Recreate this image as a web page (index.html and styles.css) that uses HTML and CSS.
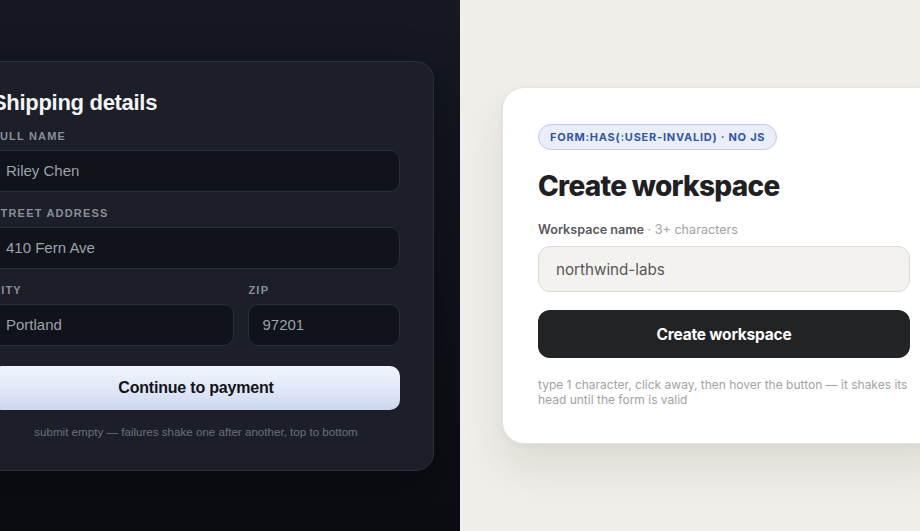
FILE: index.html
```html
<!DOCTYPE html>
<html lang="en">
<head>
<meta charset="utf-8">
<title>Forms</title>
<link rel="stylesheet" href="styles.css">
</head>
<body>
<main class="split">
  <section class="panel panel-dark">
    <form class="ship-card">
      <h2 class="ship-title">Shipping details</h2>
      <div class="ship-field">
        <label class="ship-label">Full name</label>
        <div class="ship-input">Riley Chen</div>
      </div>
      <div class="ship-field">
        <label class="ship-label">Street address</label>
        <div class="ship-input">410 Fern Ave</div>
      </div>
      <div class="ship-row">
        <div class="ship-field">
          <label class="ship-label">City</label>
          <div class="ship-input">Portland</div>
        </div>
        <div class="ship-field">
          <label class="ship-label">Zip</label>
          <div class="ship-input">97201</div>
        </div>
      </div>
      <button type="button" class="ship-button">Continue to payment</button>
      <p class="ship-hint">submit empty — failures shake one after another, top to bottom</p>
    </form>
  </section>
  <section class="panel panel-light">
    <form class="ws-card">
      <span class="ws-badge">form:has(:user-invalid) · no JS</span>
      <h2 class="ws-title">Create workspace</h2>
      <label class="ws-label"><strong>Workspace name</strong> · 3+ characters</label>
      <div class="ws-input">northwind-labs</div>
      <button type="button" class="ws-button">Create workspace</button>
      <p class="ws-hint">type 1 character, click away, then hover the button — it shakes its head until the form is valid</p>
    </form>
  </section>
</main>
</body>
</html>
```

FILE: styles.css
```css
* { box-sizing: border-box; }
html, body { margin: 0; padding: 0; }
body { width: 920px; height: 531px; overflow: hidden; }

.split {
  display: grid;
  grid-template-columns: 460px 460px;
  height: 531px;
}

.panel {
  display: flex;
  align-items: center;
  overflow: hidden;
  height: 531px;
}

.panel-dark {
  background: linear-gradient(180deg, #161922 0%, #10121a 55%, #0b0d12 100%);
  justify-content: flex-end;
  padding-right: 26px;
}

.ship-card {
  flex: 0 0 476px;
  width: 476px;
  background: #1c1f27;
  border: 1px solid #2c303a;
  border-radius: 18px;
  padding: 27px 33px 29px;
  font-family: "Liberation Sans", Arial, sans-serif;
  display: flex;
  flex-direction: column;
  box-shadow: 0 20px 50px rgba(0,0,0,0.35);
}

.ship-title {
  margin: 0 0 12px;
  font-size: 22px;
  line-height: 28px;
  font-weight: 700;
  letter-spacing: -0.3px;
  color: #f3f4f7;
}

.ship-field { display: flex; flex-direction: column; margin-bottom: 14px; }

.ship-label {
  font-size: 11px;
  line-height: 14px;
  font-weight: 700;
  letter-spacing: 1.2px;
  text-transform: uppercase;
  color: #8a8e99;
  margin-bottom: 7px;
}

.ship-input {
  height: 42px;
  border-radius: 10px;
  background: #11131a;
  border: 1px solid #2a2e38;
  padding: 0 13px;
  display: flex;
  align-items: center;
  font-size: 15px;
  color: #9da1aa;
}

.ship-row {
  display: grid;
  grid-template-columns: 1.6fr 1fr;
  gap: 14px;
}
.ship-row .ship-field { margin-bottom: 20px; }

.ship-button {
  height: 44px;
  border: 0;
  border-radius: 10px;
  background: linear-gradient(180deg, #f1f4fc 0%, #dde5f6 60%, #ccd8ef 100%);
  font-family: "Liberation Sans", Arial, sans-serif;
  font-size: 16px;
  font-weight: 700;
  color: #12141a;
  letter-spacing: -0.2px;
}

.ship-hint {
  margin: 13px 0 0;
  font-size: 11.6px;
  line-height: 18px;
  text-align: center;
  color: #6b6f7a;
}

.panel-light {
  background: #f0eee9;
  padding-left: 42px;
}

.ws-card {
  flex: 0 0 444px;
  width: 444px;
  background: #ffffff;
  border: 1px solid #e6e3dd;
  border-radius: 22px;
  padding: 36px 35px 36px;
  font-family: Inter, "Liberation Sans", sans-serif;
  display: flex;
  flex-direction: column;
  align-items: flex-start;
  box-shadow: 0 24px 40px rgba(60,50,30,0.10), 0 2px 6px rgba(60,50,30,0.04);
}

.ws-badge {
  display: inline-block;
  height: 26px;
  line-height: 24px;
  padding: 0 11px;
  border-radius: 13px;
  background: #e9eef9;
  border: 1px solid #bccbe9;
  color: #3555a5;
  font-size: 11px;
  font-weight: 700;
  letter-spacing: 0.75px;
  text-transform: uppercase;
}

.ws-title {
  margin: 18px 0 0;
  font-size: 28px;
  line-height: 36px;
  font-weight: 800;
  letter-spacing: -0.7px;
  color: #1f2023;
}

.ws-label {
  margin-top: 17px;
  font-size: 12.6px;
  line-height: 18px;
  color: #a3a3a3;
}
.ws-label strong { font-weight: 600; color: #58595c; }

.ws-input {
  margin-top: 7px;
  align-self: stretch;
  height: 46px;
  border-radius: 12px;
  background: #f4f2ee;
  border: 1px solid #dcd9d3;
  padding: 0 17px;
  display: flex;
  align-items: center;
  font-size: 15.2px;
  color: #56575a;
}

.ws-button {
  margin-top: 18px;
  align-self: stretch;
  height: 48px;
  border: 0;
  border-radius: 12px;
  background: #222325;
  color: #ffffff;
  font-family: Inter, "Liberation Sans", sans-serif;
  font-size: 15.5px;
  font-weight: 700;
  letter-spacing: -0.2px;
}

.ws-hint {
  margin: 19px 0 0;
  font-size: 12px;
  line-height: 15px;
  color: #a2a2a2;
}
```
